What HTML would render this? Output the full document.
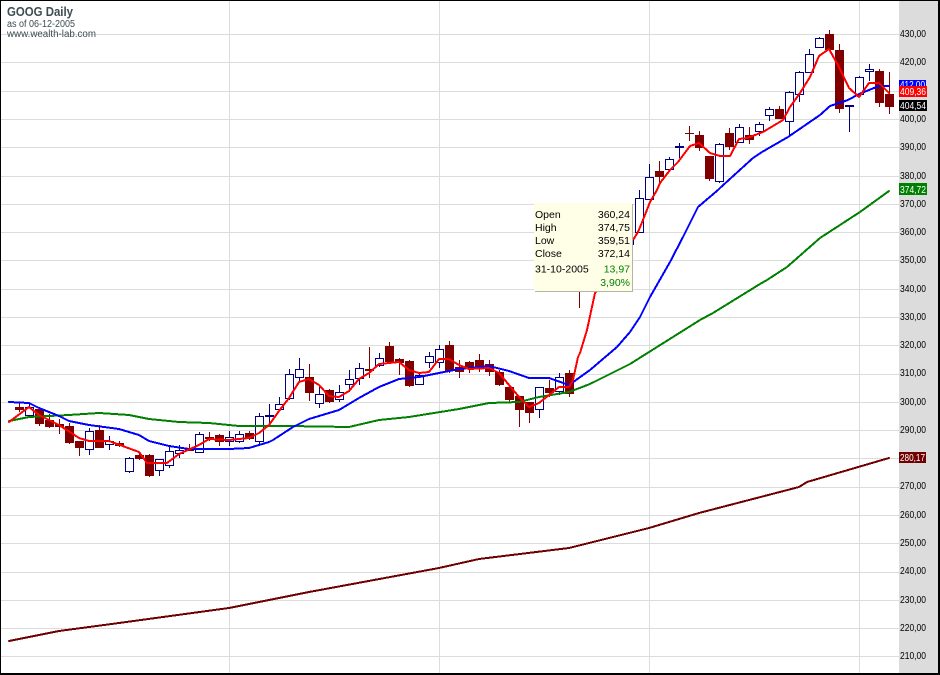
<!DOCTYPE html>
<html>
<head>
<meta charset="utf-8">
<title>GOOG Daily</title>
<style>
html,body{margin:0;padding:0;background:#fff;width:940px;height:675px;overflow:hidden}
svg{display:block}
text{font-family:"Liberation Sans",sans-serif}
</style>
</head>
<body>
<svg width="940" height="675" viewBox="0 0 940 675" xmlns="http://www.w3.org/2000/svg">
<rect width="940" height="675" fill="#fff"/>
<rect x="899" y="0" width="40" height="675" fill="#dcdcdc"/>
<g shape-rendering="crispEdges">
<path fill="none" stroke="#dcdcdc" d="M1 34.5H899M1 62.5H899M1 91.5H899M1 119.5H899M1 147.5H899M1 176.5H899M1 204.5H899M1 232.5H899M1 260.5H899M1 289.5H899M1 317.5H899M1 345.5H899M1 374.5H899M1 402.5H899M1 430.5H899M1 458.5H899M1 487.5H899M1 515.5H899M1 543.5H899M1 572.5H899M1 600.5H899M1 628.5H899M1 656.5H899M229.5 1V673M439.5 1V673M649.5 1V673M859.5 1V673"/>

<!-- dark candle wicks -->
<path fill="none" stroke="#800000" d="M19.5 403V412M39.5 407V426M49.5 414V428M59.5 419V434M69.5 423V444M79.5 441V456M99.5 425V448M119.5 441V447M139.5 454V460M149.5 454V477M189.5 444V451M209.5 432V441M219.5 434V446M249.5 431V440M309.5 364V401M329.5 389V403M369.5 347V378M389.5 342V364M399.5 358V375M409.5 360V387M449.5 341V373M459.5 360V378M469.5 361V373M479.5 354V372M489.5 360V376M499.5 370V386M509.5 387V403M519.5 396V427M529.5 402V423M549.5 380V397M569.5 370V397M579.5 292V308M659.5 161V183M689.5 126V141M685 133.5H694M699.5 131V151M709.5 156V181M729.5 128V150M749.5 127V144M779.5 106V119M829.5 30V50M839.5 44V113M879.5 69V107M889.5 72V114"/>
<!-- dark candle bodies -->
<path fill="#800000" d="M15 407h9v3h-9zM35 409h9v15h-9zM45 420h9v7h-9zM55 424h9v3h-9zM65 426h9v17h-9zM75 441h9v7h-9zM95 430h9v18h-9zM115 443h9v3h-9zM135 455h9v4h-9zM145 455h9v21h-9zM185 448h9v3h-9zM205 437h9v2h-9zM215 435h9v7h-9zM245 433h9v6h-9zM305 377h9v16h-9zM325 390h9v12h-9zM365 369h9v2h-9zM385 346h9v16h-9zM395 359h9v4h-9zM405 361h9v25h-9zM445 345h9v26h-9zM455 367h9v5h-9zM465 362h9v7h-9zM475 360h9v8h-9zM485 364h9v8h-9zM495 372h9v13h-9zM505 387h9v13h-9zM515 396h9v14h-9zM525 402h9v11h-9zM545 388h9v5h-9zM565 373h9v21h-9zM655 171h9v6h-9zM695 135h9v13h-9zM705 156h9v23h-9zM725 133h9v14h-9zM745 135h9v5h-9zM775 109h9v10h-9zM825 34h9v16h-9zM835 50h9v59h-9zM875 71h9v32h-9zM885 94h9v13h-9z"/>
<!-- white candle wicks and doji -->
<path fill="none" stroke="#000080" d="M29.5 403V416M89.5 428V455M109.5 436V450M129.5 457V473M159.5 459V476M169.5 447V468M179.5 445V458M199.5 432V453M229.5 431V446M239.5 431V443M259.5 413V445M269.5 404V427M279.5 397V410M289.5 369V400M299.5 358V382M319.5 387V408M339.5 385V402M349.5 370V392M359.5 363V385M379.5 353V367M419.5 372V385M429.5 352V368M439.5 345V368M539.5 387V418M559.5 373V395M639.5 190V232M649.5 164V199M669.5 157V170M679.5 143V158M719.5 143V183M739.5 124V143M759.5 122V136M769.5 107V121M789.5 91V137M799.5 71V102M809.5 49V72M819.5 37V48M849.5 105V132M859.5 76V95M869.5 64V81"/>
<path fill="#000080" d="M265 415h9v2h-9zM675 146h9v2h-9zM845 105h9v2h-9z"/>
<!-- white candle bodies -->
<path fill="#fff" stroke="#000080" d="M25.5 407.5h8v8h-8zM85.5 431.5h8v18h-8zM105.5 441.5h8v3h-8zM125.5 458.5h8v13h-8zM155.5 459.5h8v11h-8zM165.5 451.5h8v14h-8zM175.5 450.5h8v3h-8zM195.5 434.5h8v18h-8zM225.5 437.5h8v4h-8zM235.5 434.5h8v7h-8zM255.5 416.5h8v25h-8zM275.5 404.5h8v5h-8zM285.5 374.5h8v24h-8zM295.5 369.5h8v8h-8zM315.5 394.5h8v9h-8zM335.5 392.5h8v7h-8zM345.5 379.5h8v5h-8zM355.5 368.5h8v10h-8zM375.5 358.5h8v7h-8zM415.5 375.5h8v9h-8zM425.5 356.5h8v6h-8zM435.5 349.5h8v13h-8zM535.5 387.5h8v22h-8zM555.5 377.5h8v14h-8zM635.5 198.5h8v34h-8zM645.5 177.5h8v22h-8zM665.5 159.5h8v10h-8zM715.5 144.5h8v37h-8zM735.5 127.5h8v15h-8zM755.5 124.5h8v7h-8zM765.5 109.5h8v6h-8zM785.5 92.5h8v29h-8zM795.5 72.5h8v22h-8zM805.5 54.5h8v18h-8zM815.5 38.5h8v9h-8zM855.5 77.5h8v17h-8zM865.5 69.5h8v2h-8z"/>
</g>

<!-- moving averages -->
<g fill="none" stroke-width="2" stroke-linejoin="round" stroke-linecap="round" shape-rendering="crispEdges">
<polyline stroke="#700000" points="9,641 59,631 119,623 229,608 309,592 439,568 479,559 569,548 649,528 699,513 799,487 807,482 889,458"/>
<polyline stroke="#008000" points="9,421 29,417 69,415 99,413 129,415 149,419 179,422 209,423 239,426 289,426 349,427 379,420 409,417 459,409 489,403 519,402 539,397 569,392 590,384 618,370 630,364 700,320 713,313 760,284 767,280 787,267 820,238 860,212 889,191"/>
<polyline stroke="#0000ff" points="9,402 29,403 39,408 59,416 69,421 89,425 119,429 139,435 149,441 169,446 189,449 229,449 249,448 269,442 273,440 293,427 309,419 339,410 359,398 379,387 399,379 419,377 439,373 459,369 489,366 509,371 529,378 549,378 569,385 590,370 617,347 630,332 640,317 650,297 670,262 683,237 698,207 718,190 720,188 753,158 762,152 788,137 820,115 830,106 848,100 859,94 879,86 889,86"/>
<polyline stroke="#ff0000" points="9,422 29,407 39,415 59,425 79,438 89,441 109,441 139,452 147,463 167,463 179,454 199,445 209,439 229,440 249,438 259,433 269,425 279,411 289,398 299,382 309,379 319,385 329,396 339,397 349,391 359,379 369,373 379,364 389,363 399,362 409,370 419,373 429,372 439,359 449,359 459,365 469,369 489,368 499,373 509,385 519,397 529,407 539,403 549,395 559,387 569,387 573,380 578,357 580,353 587,330 595,293 633,240 638,232 643,220 650,202 657,190 660,183 670,170 678,162 690,146 699,143 710,153 720,156 730,156 739,139 747,138 763,132 783,120 790,107 800,93 810,77 819,56 829,49 839,67 849,88 859,97 869,83 879,83 889,93"/>
</g>

<!-- title -->
<text x="7" y="16" font-size="13" font-weight="bold" fill="#3c4c50" textLength="66" lengthAdjust="spacingAndGlyphs">GOOG Daily</text>
<text x="7" y="27" font-size="10" fill="#3c4c50" textLength="68" lengthAdjust="spacingAndGlyphs">as of 06-12-2005</text>
<text x="7" y="37" font-size="10" fill="#3c4c50" textLength="89" lengthAdjust="spacingAndGlyphs">www.wealth-lab.com</text>

<!-- axis labels -->
<g font-size="10" fill="#000">
<text x="900" y="37" textLength="26" lengthAdjust="spacingAndGlyphs">430,00</text>
<text x="900" y="65" textLength="26" lengthAdjust="spacingAndGlyphs">420,00</text>
<text x="900" y="122" textLength="26" lengthAdjust="spacingAndGlyphs">400,00</text>
<text x="900" y="150" textLength="26" lengthAdjust="spacingAndGlyphs">390,00</text>
<text x="900" y="179" textLength="26" lengthAdjust="spacingAndGlyphs">380,00</text>
<text x="900" y="207" textLength="26" lengthAdjust="spacingAndGlyphs">370,00</text>
<text x="900" y="235" textLength="26" lengthAdjust="spacingAndGlyphs">360,00</text>
<text x="900" y="263" textLength="26" lengthAdjust="spacingAndGlyphs">350,00</text>
<text x="900" y="292" textLength="26" lengthAdjust="spacingAndGlyphs">340,00</text>
<text x="900" y="320" textLength="26" lengthAdjust="spacingAndGlyphs">330,00</text>
<text x="900" y="348" textLength="26" lengthAdjust="spacingAndGlyphs">320,00</text>
<text x="900" y="376" textLength="26" lengthAdjust="spacingAndGlyphs">310,00</text>
<text x="900" y="405" textLength="26" lengthAdjust="spacingAndGlyphs">300,00</text>
<text x="900" y="433" textLength="26" lengthAdjust="spacingAndGlyphs">290,00</text>
<text x="900" y="489" textLength="26" lengthAdjust="spacingAndGlyphs">270,00</text>
<text x="900" y="518" textLength="26" lengthAdjust="spacingAndGlyphs">260,00</text>
<text x="900" y="546" textLength="26" lengthAdjust="spacingAndGlyphs">250,00</text>
<text x="900" y="574" textLength="26" lengthAdjust="spacingAndGlyphs">240,00</text>
<text x="900" y="603" textLength="26" lengthAdjust="spacingAndGlyphs">230,00</text>
<text x="900" y="631" textLength="26" lengthAdjust="spacingAndGlyphs">220,00</text>
<text x="900" y="659" textLength="26" lengthAdjust="spacingAndGlyphs">210,00</text>
</g>

<!-- value tags -->
<g font-size="10" fill="#fff">
<rect x="899" y="80" width="27" height="8" fill="#0000ff"/>
<text x="900" y="88" textLength="25" lengthAdjust="spacingAndGlyphs">412,00</text>
<rect x="899" y="86" width="28" height="11" fill="#ff0000"/>
<text x="900" y="95" textLength="26" lengthAdjust="spacingAndGlyphs">409,36</text>
<rect x="899" y="100" width="28" height="11" fill="#000"/>
<text x="900" y="109" textLength="26" lengthAdjust="spacingAndGlyphs">404,54</text>
<rect x="899" y="183" width="28" height="12" fill="#008000"/>
<text x="900" y="193" textLength="26" lengthAdjust="spacingAndGlyphs">374,72</text>
<rect x="899" y="452" width="27" height="11" fill="#700000"/>
<text x="900" y="461" textLength="25" lengthAdjust="spacingAndGlyphs">280,17</text>
</g>

<!-- tooltip -->
<path d="M633.500 240V245" stroke="#000080" fill="none" shape-rendering="crispEdges"/>
<rect x="535" y="204" width="98" height="88" fill="#b4b4a4" shape-rendering="crispEdges"/>
<rect x="534" y="203" width="98" height="88" fill="#ffffe8" shape-rendering="crispEdges"/>
<g font-size="10.5" fill="#000">
<text x="535" y="218">Open</text>
<text x="535" y="231">High</text>
<text x="535" y="244">Low</text>
<text x="535" y="257">Close</text>
<text x="535" y="272.500">31-10-2005</text>
<text x="630" y="218" text-anchor="end">360,24</text>
<text x="630" y="231" text-anchor="end">374,75</text>
<text x="630" y="244" text-anchor="end">359,51</text>
<text x="630" y="257" text-anchor="end">372,14</text>
<text x="630" y="272.500" text-anchor="end" fill="#008000">13,97</text>
<text x="630" y="286" text-anchor="end" fill="#008000">3,90%</text>
</g>

<!-- frame -->
<g fill="#000" shape-rendering="crispEdges">
<rect x="0" y="0" width="940" height="1"/>
<rect x="0" y="0" width="1" height="675"/>
<rect x="938" y="0" width="2" height="675"/>
<rect x="0" y="673" width="940" height="2"/>
</g>
</svg>
</body>
</html>
